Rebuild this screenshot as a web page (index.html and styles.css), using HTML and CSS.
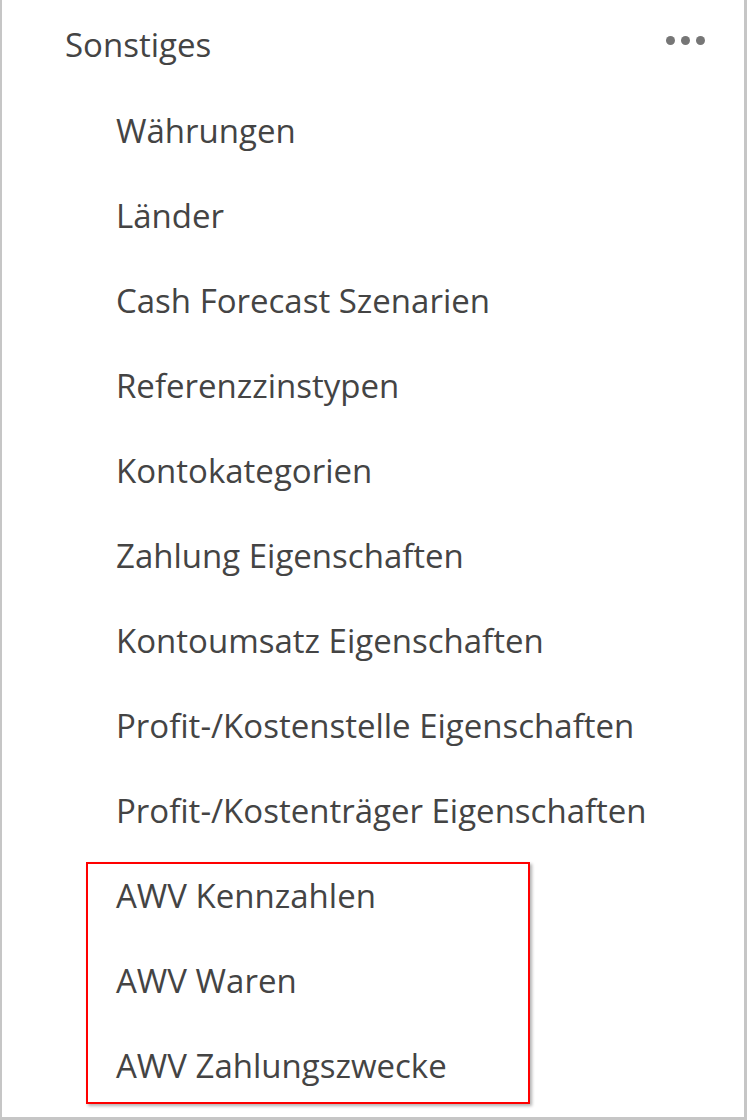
FILE: index.html
```html
<!DOCTYPE html>
<html lang="de">
<head>
<meta charset="utf-8">
<link rel="stylesheet" href="styles.css">
</head>
<body>
<div class="panel">
  <div class="header">
    <span class="title">Sonstiges</span>
    <span class="more"><i></i><i></i><i></i></span>
  </div>
  <ul class="list">
    <li>Währungen</li>
    <li>Länder</li>
    <li>Cash Forecast Szenarien</li>
    <li>Referenzzinstypen</li>
    <li>Kontokategorien</li>
    <li>Zahlung Eigenschaften</li>
    <li>Kontoumsatz Eigenschaften</li>
    <li>Profit-/Kostenstelle Eigenschaften</li>
    <li>Profit-/Kostenträger Eigenschaften</li>
    <li>AWV Kennzahlen</li>
    <li>AWV Waren</li>
    <li>AWV Zahlungszwecke</li>
  </ul>
  <div class="highlight"></div>
</div>
</body>
</html>
```
FILE: styles.css
```css
html, body {
  margin: 0;
  padding: 0;
  background: #ffffff;
}
.panel {
  position: relative;
  box-sizing: border-box;
  width: 747px;
  height: 1120px;
  border-left: 2px solid #c6c6c6;
  border-right: 3px solid #c6c6c6;
  border-bottom: 3px solid #c6c6c6;
  font-family: "Open Sans", "Noto Sans", sans-serif;
  color: #444444;
}
.header {
  display: flex;
  align-items: center;
  justify-content: space-between;
  height: 88px;
  padding: 0 39px 0 63px;
}
.title {
  font-size: 33px;
}
.more {
  display: flex;
  gap: 6px;
  margin-top: -8px;
}
.more i {
  display: block;
  width: 9px;
  height: 9px;
  border-radius: 50%;
  background: #767676;
}
.list {
  list-style: none;
  margin: 0;
  padding: 0 0 0 114px;
}
.list li {
  height: 85px;
  line-height: 85px;
  font-size: 33px;
  white-space: nowrap;
}
.highlight {
  position: absolute;
  left: 84px;
  top: 862px;
  width: 444px;
  height: 242px;
  box-sizing: border-box;
  border: 2px solid #ff0000;
  box-shadow: 2px 2px 3px rgba(0, 0, 0, 0.3);
}
```
